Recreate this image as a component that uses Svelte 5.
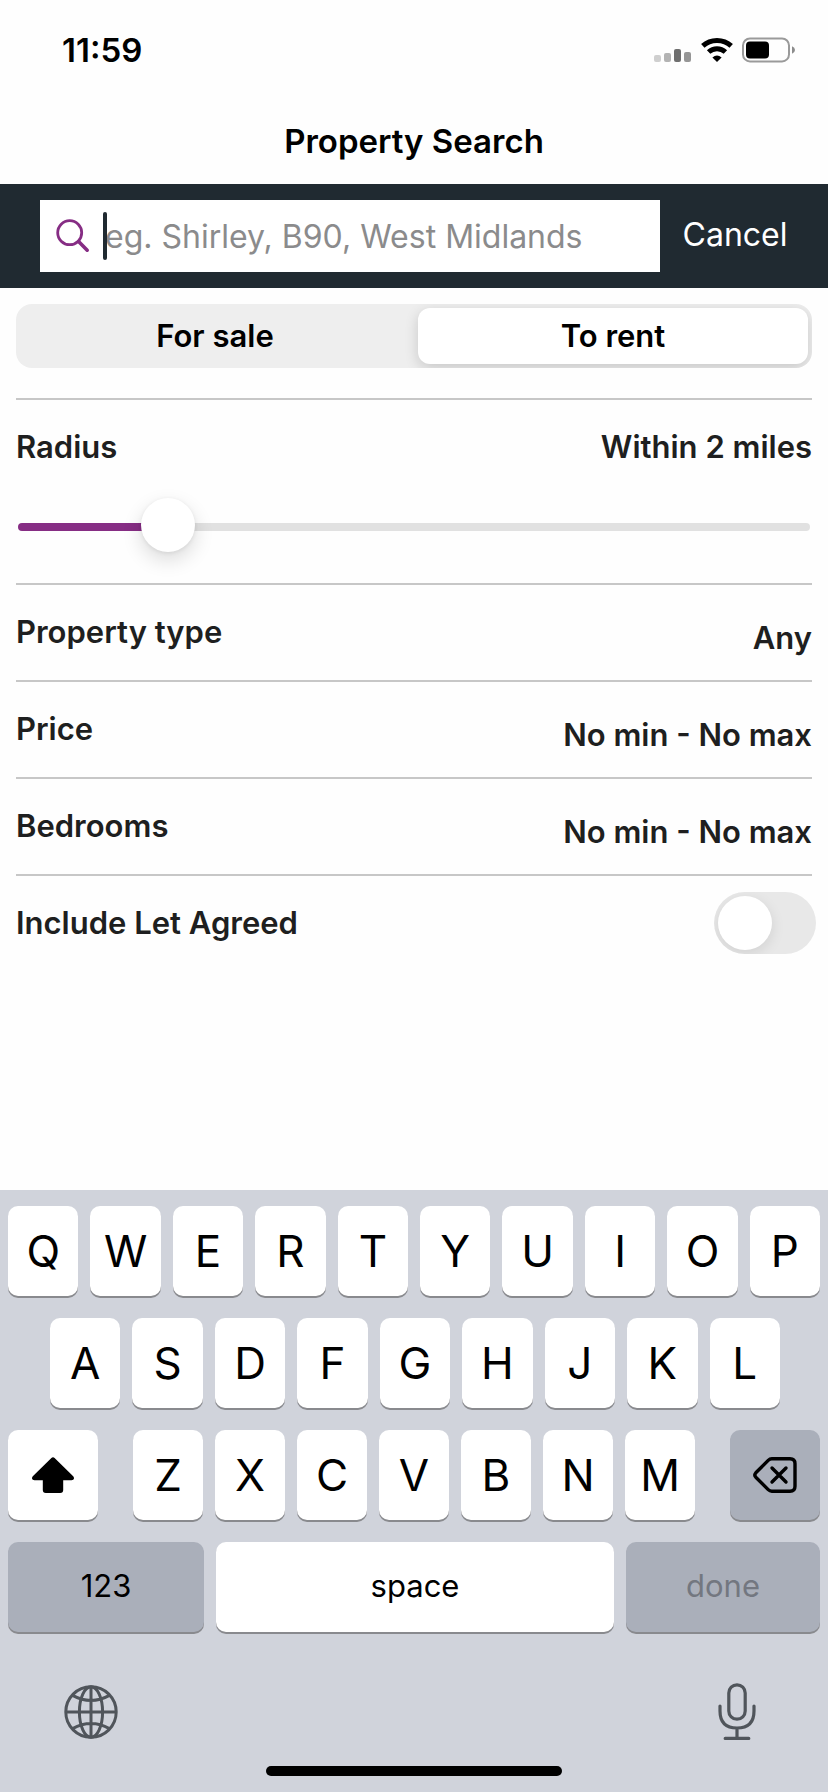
<script>
  let query = $state('');
  let mode = $state('rent');
  let radius = $state(2);
  let letAgreed = $state(false);

  const maxRadius = 12;
  const filters = [
    { label: 'Property type', value: 'Any' },
    { label: 'Price', value: 'No min - No max' },
    { label: 'Bedrooms', value: 'No min - No max' }
  ];
  const topRow = [...'QWERTYUIOP'];
  const homeRow = [...'ASDFGHJKL'];
  const bottomRow = [...'ZXCVBNM'];
</script>

<div class="screen">
  <header>
    <div class="status">
      <span class="time">11:59</span>
      <div class="indicators">
        <svg width="38" height="26" viewBox="0 0 38 26" aria-hidden="true">
          <rect x="0" y="18" width="7" height="7" rx="2" fill="#cfcfcf" />
          <rect x="10" y="16" width="7" height="9" rx="2" fill="#b3b3b3" />
          <rect x="20" y="12" width="7" height="13" rx="2" fill="#6f6f6f" />
          <rect x="30" y="15" width="7" height="10" rx="2" fill="#969696" />
        </svg>
        <svg width="32" height="26" viewBox="0 0 32 26" aria-hidden="true">
          <g fill="none" stroke="#000" stroke-width="5">
            <path d="M1.8 8.8 C9.6 1.6 22.4 1.6 30.2 8.8" />
            <path d="M7.6 15 C12.4 10.6 19.6 10.6 24.4 15" />
          </g>
          <path d="M16 25 L11.4 20.6 Q16 16.6 20.6 20.6 Z" />
        </svg>
        <svg width="54" height="26" viewBox="0 0 54 26" aria-hidden="true">
          <rect x="1" y="1.4" width="46" height="23" rx="7" fill="none" stroke="#9a9a9a" stroke-width="2" />
          <rect x="4" y="4.4" width="23" height="17" rx="4" />
          <path d="M50 9.2 Q53 10.4 53 13 Q53 15.6 50 16.8 Z" fill="#8c8c8c" />
        </svg>
      </div>
    </div>
    <h1>Property Search</h1>
  </header>

  <form class="search" role="search">
    <div class="field">
      <svg width="34" height="34" viewBox="0 0 34 34" aria-hidden="true">
        <g fill="none" stroke="#862d84" stroke-linecap="round">
          <circle cx="13.7" cy="13.7" r="12" stroke-width="2.8" />
          <path d="M22.6 22.6 L31.2 31.2" stroke-width="3.6" />
        </g>
      </svg>
      <div class="entry">
        <input type="text" aria-label="Location" placeholder="eg. Shirley, B90, West Midlands" bind:value={query} />
        <span class="caret"></span>
      </div>
    </div>
    <button type="button" class="cancel">Cancel</button>
  </form>

  <main>
    <div class="segments">
      <button class:active={mode === 'sale'} aria-pressed={mode === 'sale'} onclick={() => (mode = 'sale')}>For sale</button>
      <button class:active={mode === 'rent'} aria-pressed={mode === 'rent'} onclick={() => (mode = 'rent')}>To rent</button>
    </div>

    <section class="radius">
      <div class="radius-head">
        <label for="radius">Radius</label>
        <output for="radius">Within {radius} miles</output>
      </div>
      <input
        id="radius"
        type="range"
        min="0"
        max={maxRadius}
        bind:value={radius}
        style="--fill: {(radius / maxRadius) * 100}%"
      />
    </section>

    {#each filters as filter}
      <button class="row">
        <span>{filter.label}</span>
        <span class="value">{filter.value}</span>
      </button>
    {/each}

    <div class="row toggle-row">
      <label for="let-agreed">Include Let Agreed</label>
      <input id="let-agreed" type="checkbox" role="switch" bind:checked={letAgreed} />
    </div>
  </main>

  <div class="keyboard">
    <div class="keys">
      {#each topRow as letter}<button class="key">{letter}</button>{/each}
    </div>
    <div class="keys home">
      {#each homeRow as letter}<button class="key">{letter}</button>{/each}
    </div>
    <div class="keys bottom">
      <button class="key side" aria-label="Shift">
        <svg width="42" height="36" viewBox="0 0 42 36" aria-hidden="true">
          <path d="M19.4 .9 Q21 -.5 22.6 .9 L41.2 19.2 Q42.8 21.6 41.2 22.8 Q40.6 23.2 39.5 23.2 H31.2 V33 Q31.2 36 28.2 36 H13.8 Q10.8 36 10.8 33 V23.2 H2.5 Q1.4 23.2 .8 22.8 Q-.8 21.6 .8 19.2 Z" />
        </svg>
      </button>
      <div class="letters">
        {#each bottomRow as letter}<button class="key">{letter}</button>{/each}
      </div>
      <button class="key side grey" aria-label="Delete">
        <svg width="44" height="36" viewBox="0 0 44 36" aria-hidden="true">
          <g fill="none" stroke="#000" stroke-width="3.4" stroke-linejoin="round" stroke-linecap="round">
            <path d="M18.8 1.8 H37 Q42 1.8 42 6.8 V29.2 Q42 34.2 37 34.2 H18.8 Q16.8 34.2 15.2 32.6 L2.8 20.2 Q.8 18 2.8 15.8 L15.2 3.4 Q16.8 1.8 18.8 1.8 Z" />
            <path d="M19 11 L33 25 M33 11 L19 25" />
          </g>
        </svg>
      </button>
    </div>
    <div class="keys actions">
      <button class="key word grey">123</button>
      <button class="key word">space</button>
      <button class="key word grey" disabled>done</button>
    </div>
    <div class="tools">
      <button aria-label="Next keyboard">
        <svg width="54" height="54" viewBox="0 0 54 54" aria-hidden="true">
          <g fill="none" stroke="#50555b" stroke-width="3">
            <circle cx="27" cy="27" r="25.2" />
            <ellipse cx="27" cy="27" rx="11.6" ry="25.2" />
            <path d="M27 2 V52 M2 27 H52 M8.6 10.4 Q27 20.6 45.4 10.4 M8.6 43.6 Q27 33.4 45.4 43.6" />
          </g>
        </svg>
      </button>
      <button aria-label="Dictate">
        <svg width="38" height="58" viewBox="0 0 38 58" aria-hidden="true">
          <g fill="none" stroke="#50555b" stroke-width="3.2" stroke-linecap="round">
            <rect x="10.8" y="1.8" width="16.4" height="34.4" rx="8.2" />
            <path d="M2 23 V28 Q2 45 19 45 Q36 45 36 28 V23 M19 45 V55.4 M7.2 55.4 H30.8" />
          </g>
        </svg>
      </button>
    </div>
    <div class="home-bar"></div>
  </div>
</div>

<style>
  :global(body) {
    margin: 0;
    background: #fefefe;
  }

  .screen {
    min-height: 100vh;
    display: flex;
    flex-direction: column;
    font-family: Inter, 'Liberation Sans', sans-serif;
    font-size: 32px;
    line-height: 40px;
    color: #1e1f20;
  }

  button,
  input {
    margin: 0;
    padding: 0;
    border: 0;
    background: none;
    font: inherit;
    color: inherit;
  }

  svg {
    display: block;
    flex: none;
  }

  header {
    color: #000;
    font-size: 33px;
    font-weight: 600;
  }

  .status {
    display: flex;
    justify-content: space-between;
    align-items: center;
    padding: 30px 32px 0 62px;
  }

  .indicators {
    display: flex;
    align-items: center;
    gap: 9px;
  }

  h1 {
    margin: 0;
    padding: 51px 16px 23px;
    font-size: 33px;
    font-weight: 600;
    text-align: center;
  }

  .search {
    display: flex;
    align-items: center;
    padding: 16px 0 16px 40px;
    background: #202a31;
  }

  .field {
    flex: 1;
    min-width: 0;
    height: 72px;
    display: flex;
    align-items: center;
    gap: 15px;
    padding-left: 16px;
    background: #fff;
  }

  .entry {
    position: relative;
    flex: 1;
    min-width: 0;
  }

  .entry input {
    display: block;
    width: 100%;
    height: 48px;
    outline: none;
  }

  .entry input::placeholder {
    color: #8b8b8c;
    opacity: 1;
  }

  .caret {
    position: absolute;
    left: -2px;
    top: 0;
    width: 4px;
    height: 48px;
    border-radius: 2px;
    background: #202a31;
  }

  .cancel {
    width: 168px;
    padding: 0 18px 2px 0;
    color: #fff;
  }

  main {
    display: flex;
    flex-direction: column;
    padding: 16px;
    font-size: 31px;
    font-weight: 600;
  }

  .segments {
    display: grid;
    grid-template-columns: 1fr 1fr;
    gap: 8px;
    padding: 4px;
    margin-bottom: 30px;
    border-radius: 16px;
    background: #eee;
    overflow: hidden;
  }

  .segments button {
    height: 56px;
    border-radius: 12px;
    color: #000;
  }

  .segments .active {
    background: #fff;
    box-shadow: 0 4px 14px rgba(0, 0, 0, 0.16);
  }

  .radius {
    height: 183px;
    border-top: 2px solid #c7c7c7;
  }

  .radius-head {
    display: flex;
    justify-content: space-between;
    padding: 27px 0 56px;
  }

  .radius input {
    -webkit-appearance: none;
    appearance: none;
    display: block;
    width: calc(100% - 4px);
    height: 8px;
    margin: 0 2px;
    border-radius: 4px;
    background: linear-gradient(to right, #862d84 var(--fill), #e1e1e1 var(--fill));
  }

  .radius input::-webkit-slider-runnable-track {
    height: 8px;
  }

  .radius input::-webkit-slider-thumb {
    -webkit-appearance: none;
    width: 54px;
    height: 54px;
    margin-top: -25px;
    border-radius: 50%;
    background: #fff;
    box-shadow: 0 8px 20px rgba(0, 0, 0, 0.14), 0 1px 4px rgba(0, 0, 0, 0.08);
  }

  .row {
    display: flex;
    justify-content: space-between;
    align-items: flex-start;
    height: 97px;
    box-sizing: border-box;
    padding-top: 27px;
    border-top: 2px solid #c7c7c7;
    text-align: left;
  }

  .value {
    padding-top: 6px;
  }

  .toggle-row input {
    -webkit-appearance: none;
    appearance: none;
    width: 102px;
    height: 62px;
    margin: -11px -4px 0 0;
    padding: 4px;
    box-sizing: border-box;
    border-radius: 31px;
    background: #e8e8e8;
    overflow: hidden;
  }

  .toggle-row input::before {
    content: '';
    display: block;
    width: 54px;
    height: 54px;
    border-radius: 50%;
    background: #fff;
    box-shadow: 0 4px 14px rgba(0, 0, 0, 0.1);
  }

  .toggle-row input:checked {
    background: #862d84;
  }

  .toggle-row input:checked::before {
    margin-left: 40px;
  }

  .keyboard {
    margin-top: auto;
    display: flex;
    flex-direction: column;
    gap: 22px;
    padding: 16px 8px;
    background: #d0d3db;
    color: #000;
  }

  .keys,
  .letters {
    display: flex;
    gap: 12px;
  }

  .home {
    padding: 0 40px 0 42px;
  }

  .bottom {
    justify-content: space-between;
    gap: 35px;
  }

  .letters {
    flex: 1;
  }

  .key {
    flex: 1;
    min-width: 0;
    height: 90px;
    display: flex;
    align-items: center;
    justify-content: center;
    border-radius: 10px;
    background: #fff;
    box-shadow: 0 2px 0 #898a8e;
    font-size: 44px;
  }

  .side {
    flex: none;
    width: 90px;
  }

  .grey {
    background: #aaafba;
  }

  .actions {
    display: grid;
    grid-template-columns: 98fr 199fr 97fr;
  }

  .word {
    padding-bottom: 2px;
    font-size: 31px;
  }

  .word:disabled {
    color: #737780;
  }

  .tools {
    display: flex;
    justify-content: space-between;
    align-items: center;
    padding: 29px 64px 3px 56px;
  }

  .home-bar {
    align-self: center;
    width: 296px;
    height: 10px;
    border-radius: 5px;
    background: #000;
  }
</style>
